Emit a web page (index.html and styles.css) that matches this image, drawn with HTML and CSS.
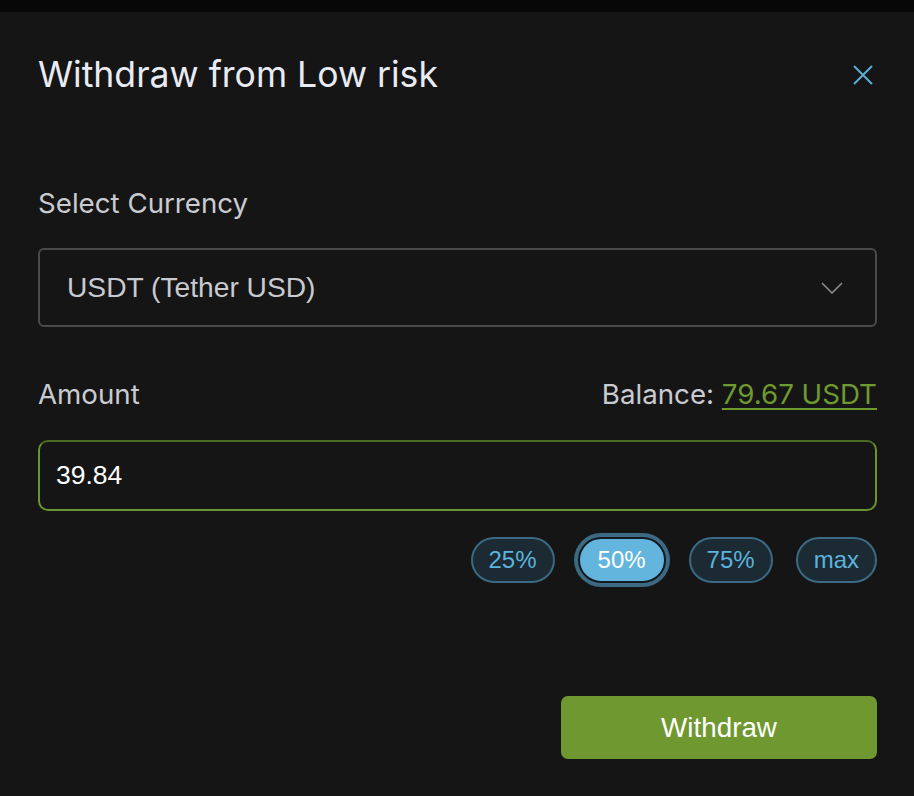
FILE: index.html
```html
<!DOCTYPE html>
<html lang="en">
<head>
<meta charset="utf-8">
<title>Withdraw from Low risk</title>
<link rel="stylesheet" href="styles.css">
</head>
<body>
<div class="topbar"></div>
<main class="modal">
  <header class="modal-head">
    <h1 class="title">Withdraw from Low risk</h1>
    <button class="close" aria-label="Close">
      <svg width="20" height="20" viewBox="0 0 20 20"><path d="M1 1L19 19M19 1L1 19" stroke="#5aaed6" stroke-width="2" fill="none"/></svg>
    </button>
  </header>

  <div class="label label-currency">Select Currency</div>
  <div class="select">
    <span class="select-text">USDT (Tether USD)</span>
    <svg class="chevron" width="22" height="12" viewBox="0 0 22 12"><path d="M1 1L11 11L21 1" stroke="#8c8c8c" stroke-width="1.6" fill="none"/></svg>
  </div>

  <div class="amount-row">
    <span class="label">Amount</span>
    <span class="label">Balance: <a class="balance" href="#">79.67 USDT</a></span>
  </div>
  <div class="input">39.84</div>

  <div class="pills">
    <button class="pill">25%</button>
    <button class="pill active">50%</button>
    <button class="pill">75%</button>
    <button class="pill">max</button>
  </div>

  <div class="actions">
    <button class="withdraw">Withdraw</button>
  </div>
</main>
</body>
</html>
```

FILE: styles.css
```css
html, body {
  margin: 0;
  padding: 0;
  background: #151515;
  height: 100%;
}
.topbar {
  height: 12px;
  background: #070707;
}
.modal {
  padding: 0 37px 0 38px;
  font-family: Inter, "Liberation Sans", sans-serif;
}
.modal-head {
  display: flex;
  justify-content: space-between;
  align-items: center;
  margin-top: 42px;
}
.title {
  margin: 0;
  font-weight: 400;
  font-size: 35.6px;
  line-height: 42px;
  color: #e9ebf2;
}
.close {
  background: none;
  border: 0;
  padding: 0;
  width: 20px;
  height: 20px;
  margin-right: 4px;
  display: flex;
}
.label {
  font-size: 27.7px;
  line-height: 30px;
  color: #cacbd1;
}
.label-currency {
  margin-top: 92px;
}
.select {
  margin-top: 30px;
  height: 79px;
  box-sizing: border-box;
  border: 2px solid #4a4a4a;
  border-radius: 6px;
  display: flex;
  align-items: center;
  justify-content: space-between;
  padding: 0 32px 0 27px;
}
.select-text {
  font-family: "Liberation Sans", Arial, sans-serif;
  font-size: 28.2px;
  color: #c9cad0;
}
.amount-row {
  margin-top: 52px;
  display: flex;
  justify-content: space-between;
}
.balance {
  color: #6f9a2f;
  text-decoration: underline;
  text-underline-offset: 4px;
  text-decoration-thickness: 2px;
}
.input {
  margin-top: 31px;
  height: 71px;
  box-sizing: border-box;
  border: 2px solid #6a9430;
  border-top-color: #4c6b24;
  border-radius: 10px;
  display: flex;
  align-items: center;
  padding: 0 16px;
  font-family: "Liberation Sans", Arial, sans-serif;
  font-size: 26.5px;
  color: #ffffff;
}
.pills {
  margin-top: 26px;
  display: flex;
  justify-content: flex-end;
  gap: 23px;
}
.pill {
  height: 46px;
  box-sizing: border-box;
  border: 2px solid #3b6a84;
  background: #1b2a33;
  color: #5cb3dc;
  border-radius: 23px;
  padding: 0 16px;
  font-family: "Liberation Sans", Arial, sans-serif;
  font-size: 24px;
  cursor: pointer;
}
.pill.active {
  background: #64b5dd;
  color: #ffffff;
  border-color: #10191f;
  box-shadow: 0 0 0 4px #3c6a82;
  padding: 0 18px;
}
.actions {
  margin-top: 113px;
  display: flex;
  justify-content: flex-end;
}
.withdraw {
  width: 316px;
  height: 63px;
  border: 0;
  border-radius: 7px;
  background: #6f9830;
  color: #ffffff;
  font-family: "Liberation Sans", Arial, sans-serif;
  font-size: 27.8px;
  cursor: pointer;
}
```
